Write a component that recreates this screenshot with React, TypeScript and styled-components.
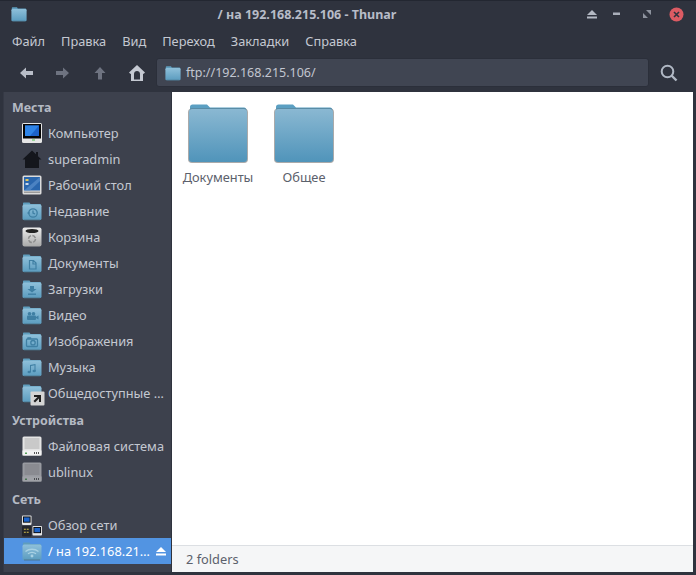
import { FunctionComponent, ReactNode } from "react";
import styled, { createGlobalStyle } from "styled-components";

const GlobalStyle = createGlobalStyle`
    html, body {
        margin: 0;
        padding: 0;
        background: #2a2e38;
    }
    * {
        box-sizing: border-box;
    }
`;

const Window = styled.div`
    display: flex;
    flex-direction: column;
    width: 696px;
    height: 575px;
    padding: 0 3px 3px 3px;
    background: #2f333e;
    border-top: 1px solid #232731;
    font-family: "Noto Sans", "Open Sans", sans-serif;
    font-size: 12.8px;
    color: #c6cad3;
    overflow: hidden;
`;

const TitleBar = styled.div`
    display: flex;
    align-items: center;
    height: 26px;
    flex-shrink: 0;
    position: relative;
    padding: 0 0 0 8px;
`;

const TitleText = styled.div`
    position: absolute;
    left: 0;
    right: 82px;
    text-align: center;
    font-weight: 700;
    font-size: 12.5px;
    color: #b7bcc8;
`;

const WindowButtons = styled.div`
    display: flex;
    align-items: center;
    margin-left: auto;
    padding-right: 4px;
`;

const WindowButton = styled.div<{ $width: number }>`
    display: flex;
    align-items: center;
    justify-content: center;
    width: ${(p) => p.$width}px;
    height: 24px;
`;

const MenuBar = styled.div`
    display: flex;
    align-items: center;
    height: 28px;
    flex-shrink: 0;
    padding-left: 9px;
    gap: 16px;
`;

const MenuItem = styled.div`
    font-size: 12.8px;
    color: #c4c8d1;
`;

const Toolbar = styled.div`
    display: flex;
    align-items: center;
    height: 37px;
    flex-shrink: 0;
    padding: 0 0 2px 4px;
`;

const NavButton = styled.div`
    display: flex;
    align-items: center;
    justify-content: center;
    width: 37px;
    height: 30px;
`;

const PathBar = styled.div`
    display: flex;
    align-items: center;
    gap: 5px;
    width: 493px;
    height: 29px;
    margin-left: 1px;
    padding-left: 8px;
    background: #404552;
    border: 1px solid #2b2f3a;
    border-radius: 3px;
    font-size: 12.5px;
    color: #c2c6d0;
`;

const SearchButton = styled.div`
    display: flex;
    align-items: center;
    justify-content: center;
    width: 40px;
    height: 30px;
`;

const Body = styled.div`
    display: flex;
    flex: 1;
    min-height: 0;
`;

const Sidebar = styled.div`
    display: flex;
    flex-direction: column;
    width: 168px;
    flex-shrink: 0;
    background: #3d414d;
    border-left: 1px solid #353945;
`;

const SectionTitle = styled.div<{ $first?: boolean }>`
    display: flex;
    align-items: center;
    height: 26px;
    flex-shrink: 0;
    padding-left: 8px;
    margin-top: ${(p) => (p.$first ? "2px" : "1px")};
    font-weight: 700;
    font-size: 12.5px;
    color: #b4b9c3;
`;

const Row = styled.div<{ $selected?: boolean }>`
    display: flex;
    align-items: center;
    height: 26px;
    flex-shrink: 0;
    padding-left: 18px;
    gap: 6px;
    background: ${(p) => (p.$selected ? "#5294e2" : "transparent")};
    color: ${(p) => (p.$selected ? "#ffffff" : "#c4c8d1")};
    font-size: 12.8px;
`;

const RowIcon = styled.div<{ $size?: number }>`
    position: relative;
    display: flex;
    width: ${(p) => p.$size ?? 20}px;
    height: ${(p) => p.$size ?? 20}px;
    flex-shrink: 0;
`;

const RowLabel = styled.div`
    white-space: nowrap;
`;

const Eject = styled.div`
    display: flex;
    margin-left: auto;
    padding-right: 5px;
`;

const Main = styled.div`
    display: flex;
    flex-direction: column;
    flex: 1;
    min-width: 0;
    background: #ffffff;
    border-left: 1px solid #2f333e;
`;

const Files = styled.div`
    display: flex;
    flex: 1;
    align-items: flex-start;
    padding: 12px 0 0 3px;
    background: #ffffff;
`;

const FileItem = styled.div`
    display: flex;
    flex-direction: column;
    align-items: center;
    width: 86px;
    color: #5c616c;
    font-size: 12.8px;
`;

const FileLabel = styled.div`
    margin-top: 5px;
    line-height: 17px;
`;

const StatusBar = styled.div`
    display: flex;
    align-items: center;
    height: 27px;
    flex-shrink: 0;
    padding-left: 14px;
    background: #f5f6f7;
    border-top: 1px solid #dcdfe3;
    color: #5c616c;
    font-size: 12.8px;
`;

type GlyphName = "clock" | "doc" | "down" | "video" | "photo" | "music" | "wifi";

const Glyph: FunctionComponent<{ name?: GlyphName }> = ({ name }) => {
    const c = "#3f7fa3";
    if (name === "clock")
        return (
            <g fill="none" stroke={c} strokeWidth="1.3">
                <circle cx="11" cy="12" r="4.2" />
                <path d="M11 9.5V12l2 1M5.5 12h2" />
            </g>
        );
    if (name === "doc") return <path d="M7.5 7.5h4l2.5 2.5v6h-6.5zM11 8v3h3" fill="none" stroke={c} strokeWidth="1.2" />;
    if (name === "down")
        return (
            <g fill={c}>
                <path d="M8 7h4v3h2.5L10 13.5 5.500 10H8z" />
                <rect x="6" y="14.5" width="8" height="1.4" />
            </g>
        );
    if (name === "video")
        return (
            <g fill={c}>
                <circle cx="7.5" cy="8.8" r="1.8" />
                <circle cx="11.5" cy="8.8" r="1.8" />
                <rect x="5" y="10.5" width="9" height="4.5" rx="1" />
                <path d="M14 12l2.5-1.5v4L14 13z" />
            </g>
        );
    if (name === "photo")
        return (
            <g fill="none" stroke={c} strokeWidth="1.3">
                <rect x="4.5" y="8" width="11" height="7.5" rx="1" />
                <circle cx="11" cy="11.7" r="2.2" />
                <path d="M6 8V7h2.5v1" />
            </g>
        );
    if (name === "music")
        return (
            <g fill={c}>
                <path d="M8 8l5.5-1v7h-1V8.3l-3.5.7V15H8z" />
                <ellipse cx="7.2" cy="15" rx="1.7" ry="1.2" />
                <ellipse cx="12.2" cy="14" rx="1.7" ry="1.2" />
            </g>
        );
    if (name === "wifi")
        return (
            <g fill="none" stroke="#a9d2e4" strokeWidth="1.3">
                <path d="M3.5 10.5c3.7-3 9.3-3 13 0M6 12.8c2.4-1.8 5.6-1.8 8 0" />
                <circle cx="10" cy="15" r="0.8" fill="#a9d2e4" />
            </g>
        );
    return null;
};

const FolderIcon: FunctionComponent<{ name?: GlyphName; id: string; size?: number }> = ({ name, id, size = 20 }) => (
    <svg width={size} height={size} viewBox="0 0 20 20">
        <defs>
            <linearGradient id={id} x1="0" y1="0" x2="0" y2="1">
                <stop offset="0" stopColor="#8fc0da" />
                <stop offset="1" stopColor="#5b9cbf" />
            </linearGradient>
        </defs>
        <path d="M1 2.6c0-.6.4-1 1-1h5.5l1 1.4H18c.6 0 1 .4 1 1V6H1z" fill="#5f9dbd" />
        <rect x="0.5" y="3.6" width="19" height="15.4" rx="1.6" fill={`url(#${id})`} />
        <path d="M2 19h16" stroke="#4a6d82" strokeWidth="0.8" />
        <Glyph name={name} />
    </svg>
);

const ComputerIcon = () => (
    <svg width="20" height="20" viewBox="0 0 20 20">
        <rect x="0" y="0" width="20" height="20" rx="1.5" fill="#e6e6e6" />
        <rect x="1" y="1" width="18" height="14.5" fill="#050505" />
        <path d="M3 2.500h14v10.500H3z" fill="#1c63c9" />
        <path d="M3 2.500h14L8 13H3z" fill="#2f84e6" />
        <rect x="10" y="16.500" width="3" height="1" fill="#4cc34c" />
    </svg>
);

const HomeIcon = () => (
    <svg width="20" height="20" viewBox="0 0 20 20">
        <path d="M10 1.500L0.500 10.500H3V19h14v-8.500h2.500L16 7.200V3h-2v2.200z" fill="#14161c" />
    </svg>
);

const DesktopIcon = () => (
    <svg width="20" height="20" viewBox="0 0 20 20">
        <rect x="0.500" y="0.500" width="19" height="19" rx="1.500" fill="#dcdcdc" />
        <rect x="2" y="2" width="16" height="13.500" fill="#2a66ad" />
        <path d="M18 2v4L8 15.500H2z" fill="#5a8fca" opacity="0.7" />
        <rect x="3.500" y="4" width="3" height="2" fill="#e4c65a" />
        <rect x="3.500" y="8" width="3" height="2" fill="#c9d8ea" />
        <rect x="2" y="16.500" width="16" height="1.500" fill="#9b9b9b" />
    </svg>
);

const TrashIcon = () => (
    <svg width="20" height="20" viewBox="0 0 20 20">
        <defs>
            <linearGradient id="trash" x1="0" y1="0" x2="0" y2="1">
                <stop offset="0" stopColor="#ececec" />
                <stop offset="1" stopColor="#a9a9a9" />
            </linearGradient>
        </defs>
        <rect x="0.500" y="0.500" width="19" height="19" rx="2" fill="url(#trash)" />
        <ellipse cx="10" cy="4" rx="6.500" ry="2" fill="#222222" />
        <circle cx="10" cy="12" r="3.500" fill="none" stroke="#8c8c8c" strokeWidth="1.500" strokeDasharray="4 1.500" />
    </svg>
);

const DriveIcon: FunctionComponent<{ $dim?: boolean }> = ({ $dim }) => (
    <svg width="20" height="20" viewBox="0 0 20 20" opacity={$dim ? 0.55 : 1}>
        <rect x="0.500" y="0.500" width="19" height="19" rx="1.500" fill="#e4e4e4" />
        <rect x="2.500" y="2" width="15" height="11" fill="#c9c9c9" />
        <rect x="0.500" y="14.500" width="19" height="5" fill="#f2f2f2" />
        <rect x="3" y="16.500" width="2" height="1.500" fill="#57a05a" />
        <path d="M12 16h1v2h-1zM14 16h1v2h-1zM16 16h1v2h-1z" fill="#555555" />
    </svg>
);

const NetworkIcon = () => (
    <svg width="21" height="22" viewBox="0 0 21 22">
        <rect x="0" y="0" width="10" height="10" rx="1" fill="#e8e8e8" />
        <rect x="1" y="1" width="8" height="6.500" fill="#0a0a0a" />
        <rect x="2" y="2" width="6" height="4.500" fill="#1c63c9" />
        <rect x="0" y="11" width="10" height="11" rx="1" fill="#23252b" />
        <path d="M2 14h2v1H2zM5 14h2v1H5zM2 17h2v1H2zM5 17h2v1H5z" fill="#d6c04a" />
        <rect x="11" y="11" width="10" height="10" rx="1" fill="#e8e8e8" />
        <rect x="12" y="12" width="8" height="6.500" fill="#0a0a0a" />
        <rect x="13" y="13" width="6" height="4.500" fill="#1c63c9" />
    </svg>
);

const LinkBadge = styled.div`
    position: absolute;
    right: -3px;
    bottom: -3px;
    display: flex;
    width: 15px;
    height: 15px;
`;

const PublicBadge = () => (
    <LinkBadge>
        <svg width="15" height="15" viewBox="0 0 15 15">
            <rect x="0.500" y="0.500" width="14" height="14" rx="1" fill="#d4d4d4" />
            <path d="M4 4h7v7H9V7.500L5 11.500 3.500 10 7.500 6H4z" fill="#1f1f1f" />
        </svg>
    </LinkBadge>
);

const EjectIcon: FunctionComponent<{ color: string }> = ({ color }) => (
    <svg width="10" height="10" viewBox="0 0 10 10">
        <path d="M5 1l5 5H0z" fill={color} />
        <rect x="0" y="7.500" width="10" height="2" fill={color} />
    </svg>
);

const BigFolder: FunctionComponent<{ id: string }> = ({ id }) => (
    <svg width="62" height="60" viewBox="0 0 62 60">
        <defs>
            <linearGradient id={id} x1="0" y1="0" x2="0" y2="1">
                <stop offset="0" stopColor="#8ab8d2" />
                <stop offset="1" stopColor="#5094ba" />
            </linearGradient>
        </defs>
        <path d="M3 3c0-1.500 1-2.500 2.500-2.500H20L23 3.500h34c1.500 0 2.500 1 2.500 2.500v5H3z" fill="#5b9fc2" />
        <rect x="1" y="4.500" width="60" height="54.500" rx="4" fill="#555555" opacity="0.5" />
        <rect x="2" y="5" width="58" height="53" rx="3" fill={`url(#${id})`} />
    </svg>
);

const ArrowIcon: FunctionComponent<{ dir: "left" | "right" | "up"; color: string }> = ({ dir, color }) => {
    const d =
        dir === "left"
            ? "M1 7l6-5.500V5h7v4H7v3.500z"
            : dir === "right"
            ? "M13 7L7 1.500V5H0v4h7v3.500z"
            : "M7 1L1.500 7H5v6.500h4V7h3.500z";
    return (
        <svg width="14" height="14" viewBox="0 0 14 14">
            <path d={d} fill={color} />
        </svg>
    );
};

type Item = { label: string; icon: ReactNode };

const places: Item[] = [
    { label: "Компьютер", icon: <ComputerIcon /> },
    { label: "superadmin", icon: <HomeIcon /> },
    { label: "Рабочий стол", icon: <DesktopIcon /> },
    { label: "Недавние", icon: <FolderIcon id="f-clock" name="clock" /> },
    { label: "Корзина", icon: <TrashIcon /> },
    { label: "Документы", icon: <FolderIcon id="f-doc" name="doc" /> },
    { label: "Загрузки", icon: <FolderIcon id="f-down" name="down" /> },
    { label: "Видео", icon: <FolderIcon id="f-video" name="video" /> },
    { label: "Изображения", icon: <FolderIcon id="f-photo" name="photo" /> },
    { label: "Музыка", icon: <FolderIcon id="f-music" name="music" /> },
    {
        label: "Общедоступные …",
        icon: (
            <>
                <FolderIcon id="f-public" />
                <PublicBadge />
            </>
        )
    }
];

const devices: Item[] = [
    { label: "Файловая система", icon: <DriveIcon /> },
    { label: "ublinux", icon: <DriveIcon $dim /> }
];

const menuItems = ["Файл", "Правка", "Вид", "Переход", "Закладки", "Справка"];

const renderRows = (items: Item[]) =>
    items.map((item) => (
        <Row key={item.label}>
            <RowIcon>{item.icon}</RowIcon>
            <RowLabel>{item.label}</RowLabel>
        </Row>
    ));

export default function App() {
    return (
        <Window>
            <GlobalStyle />
            <TitleBar>
                <RowIcon $size={16}>
                    <FolderIcon id="f-title" size={16} />
                </RowIcon>
                <TitleText>/ на 192.168.215.106 - Thunar</TitleText>
                <WindowButtons>
                    <WindowButton $width={25}>
                        <EjectIcon color="#b4b9c3" />
                    </WindowButton>
                    <WindowButton $width={25}>
                        <svg width="8" height="4" viewBox="0 0 8 4">
                            <rect width="7" height="2.500" y="0.500" fill="#a9aeb9" />
                        </svg>
                    </WindowButton>
                    <WindowButton $width={35}>
                        <svg width="8" height="8" viewBox="0 0 8 8">
                            <path d="M3 0h5v5zM0 3l5 5H0z" fill="#8e939e" />
                        </svg>
                    </WindowButton>
                    <WindowButton $width={25}>
                        <svg width="15" height="15" viewBox="0 0 15 15">
                            <circle cx="7.500" cy="7.500" r="7" fill="#dc5b63" />
                            <path d="M5 5l5 5M10 5l-5 5" stroke="#2f333e" strokeWidth="1.600" />
                        </svg>
                    </WindowButton>
                </WindowButtons>
            </TitleBar>
            <MenuBar>
                {menuItems.map((item) => (
                    <MenuItem key={item}>{item}</MenuItem>
                ))}
            </MenuBar>
            <Toolbar>
                <NavButton>
                    <ArrowIcon dir="left" color="#b9bec8" />
                </NavButton>
                <NavButton>
                    <ArrowIcon dir="right" color="#6e7380" />
                </NavButton>
                <NavButton>
                    <ArrowIcon dir="up" color="#6e7380" />
                </NavButton>
                <NavButton>
                    <svg width="18" height="18" viewBox="0 0 18 18">
                        <path d="M9 1L1 8.500 2.500 10 3 9.500V17h12V9.500l.5.5L17 8.500z" fill="#c5c9d2" />
                        <path d="M6 15.500V10c0-1.700 1.300-3 3-3s3 1.300 3 3v5.500z" fill="#2f333e" />
                    </svg>
                </NavButton>
                <PathBar>
                    <RowIcon $size={16}>
                        <FolderIcon id="f-path" size={16} />
                    </RowIcon>
                    ftp://192.168.215.106/
                </PathBar>
                <SearchButton>
                    <svg width="18" height="18" viewBox="0 0 18 18">
                        <circle cx="7.500" cy="7.500" r="5.800" fill="none" stroke="#b0b8c4" strokeWidth="2" />
                        <path d="M11.500 11.500l5 5" stroke="#b0b8c4" strokeWidth="2.400" />
                    </svg>
                </SearchButton>
            </Toolbar>
            <Body>
                <Sidebar>
                    <SectionTitle $first>Места</SectionTitle>
                    {renderRows(places)}
                    <SectionTitle>Устройства</SectionTitle>
                    {renderRows(devices)}
                    <SectionTitle>Сеть</SectionTitle>
                    <Row>
                        <RowIcon>
                            <NetworkIcon />
                        </RowIcon>
                        <RowLabel>Обзор сети</RowLabel>
                    </Row>
                    <Row $selected>
                        <RowIcon>
                            <FolderIcon id="f-wifi" name="wifi" />
                        </RowIcon>
                        <RowLabel>/ на 192.168.21…</RowLabel>
                        <Eject>
                            <EjectIcon color="#ffffff" />
                        </Eject>
                    </Row>
                </Sidebar>
                <Main>
                    <Files>
                        <FileItem>
                            <BigFolder id="big-docs" />
                            <FileLabel>Документы</FileLabel>
                        </FileItem>
                        <FileItem>
                            <BigFolder id="big-shared" />
                            <FileLabel>Общее</FileLabel>
                        </FileItem>
                    </Files>
                    <StatusBar>2 folders</StatusBar>
                </Main>
            </Body>
        </Window>
    );
}
